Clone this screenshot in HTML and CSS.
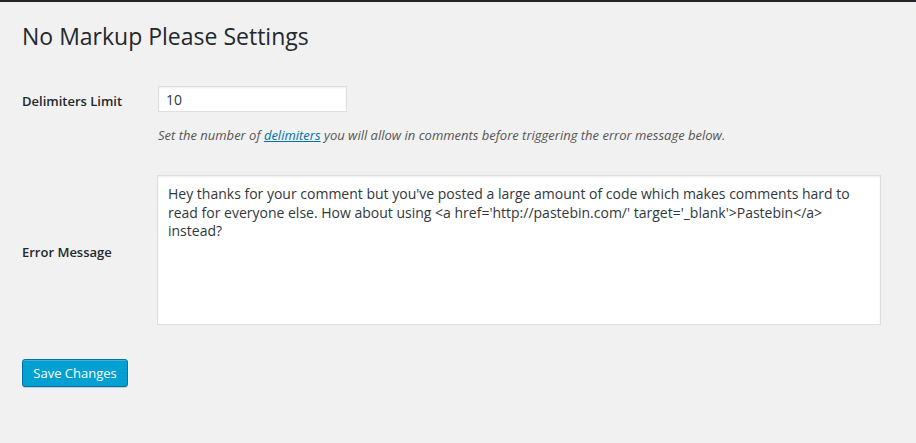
FILE: index.html
```html
<!DOCTYPE html>
<html lang="en">
<head>
<meta charset="utf-8">
<title>No Markup Please Settings</title>
<link rel="stylesheet" href="styles.css">
</head>
<body>
<div class="topbar"></div>
<div class="wrap">
  <h1 class="title">No Markup Please Settings</h1>
  <form class="settings">
    <div class="row row-limit">
      <label class="label" for="limit">Delimiters Limit</label>
      <div class="field">
        <input class="text-input" id="limit" type="text" value="10">
      </div>
    </div>
    <p class="description">Set the number of <a href="#">delimiters</a> you will allow in comments before triggering the error message below.</p>
    <div class="row row-message">
      <label class="label" for="message">Error Message</label>
      <div class="field">
        <textarea class="textarea" id="message">Hey thanks for your comment but you've posted a large amount of code which makes comments hard to read for everyone else. How about using &lt;a href='http://pastebin.com/' target='_blank'&gt;Pastebin&lt;/a&gt; instead?</textarea>
      </div>
    </div>
    <div class="submit">
      <button class="button-primary" type="button">Save Changes</button>
    </div>
  </form>
</div>
</body>
</html>
```

FILE: styles.css
```css
html, body {
  margin: 0;
  padding: 0;
}
body {
  background: #f1f1f1;
  color: #444;
  font-family: "Open Sans", "Noto Sans", sans-serif;
  font-size: 13px;
  width: 916px;
  height: 443px;
  overflow: hidden;
}
.topbar {
  height: 2px;
  background: #23282d;
}
.wrap {
  padding: 0 35px 0 22px;
}
.title {
  margin: 0;
  padding-top: 20px;
  font-size: 23px;
  font-weight: 400;
  line-height: 29px;
  color: #23282d;
}
.settings {
  margin: 0;
}
.row {
  display: grid;
  grid-template-columns: 135px 724px;
  align-items: center;
}
.row-limit {
  margin-top: 35px;
}
.label {
  padding-top: 4px;
  font-size: 13px;
  font-weight: 600;
  color: #23282d;
  line-height: 18px;
}
.field {
  display: flex;
}
.text-input {
  box-sizing: border-box;
  width: 189px;
  height: 26px;
  margin: 0 0 0 1px;
  padding: 0 6px 0 7px;
  border: 1px solid #ddd;
  background: #fff;
  box-shadow: inset 0 1px 2px rgba(0, 0, 0, 0.07);
  font-family: "Open Sans", "Noto Sans", sans-serif;
  font-size: 14px;
  color: #32373c;
  outline: none;
}
.description {
  margin: 14px 0 0 136px;
  font-size: 13px;
  font-style: italic;
  line-height: 18px;
  color: #555;
}
.description a {
  color: #0073aa;
  text-decoration: underline;
}
.row-message {
  margin-top: 31px;
}
.textarea {
  box-sizing: border-box;
  width: 724px;
  height: 150px;
  margin: 0;
  padding: 9px 10px;
  border: 1px solid #ddd;
  background: #fff;
  box-shadow: inset 0 1px 2px rgba(0, 0, 0, 0.07);
  font-family: "Open Sans", "Noto Sans", sans-serif;
  font-size: 14px;
  line-height: 18.6px;
  color: #32373c;
  resize: none;
  outline: none;
  overflow: hidden;
}
.submit {
  margin-top: 34px;
}
.button-primary {
  box-sizing: border-box;
  width: 106px;
  height: 28px;
  margin: 0;
  padding: 0 0 1px;
  border: 1px solid #0073aa;
  border-radius: 3px;
  background: #00a0d2;
  box-shadow: inset 0 1px 0 rgba(120, 200, 230, 0.5), 0 1px 0 rgba(0, 0, 0, 0.15);
  color: #fff;
  font-family: "Open Sans", "Noto Sans", sans-serif;
  font-size: 13px;
  line-height: 26px;
  white-space: nowrap;
  text-align: center;
  cursor: pointer;
}
```
